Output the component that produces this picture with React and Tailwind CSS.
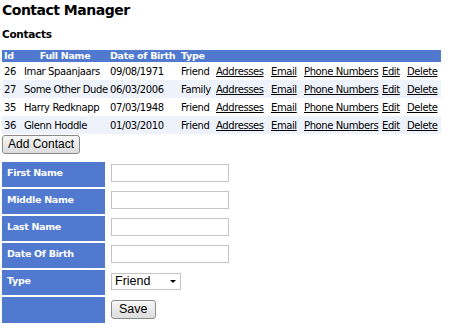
import React from 'react'

const contacts = [
  { id: 26, name: 'Imar Spaanjaars', dob: '09/08/1971', type: 'Friend' },
  { id: 27, name: 'Some Other Dude', dob: '06/03/2006', type: 'Family' },
  { id: 35, name: 'Harry Redknapp', dob: '07/03/1948', type: 'Friend' },
  { id: 36, name: 'Glenn Hoddle', dob: '01/03/2010', type: 'Friend' },
]

const links = ['Addresses', 'Email', 'Phone Numbers', 'Edit', 'Delete']
const colWidths = [20, 86, 71, 35, 55, 33, 78, 25, 36]

const fields = ['First Name', 'Middle Name', 'Last Name', 'Date Of Birth']

const App = () => {
  return (
    <div className="w-[450px] h-[330px] bg-white text-black overflow-hidden px-[2px] text-[10px] tracking-[-0.4px] font-['DejaVu_Sans',Verdana,sans-serif]">
      <h1 className="text-[14px] tracking-[-0.5px] font-bold leading-[18px] pt-[1px]">Contact Manager</h1>
      <h2 className="text-[10.5px] tracking-[-0.3px] font-bold leading-[14px] mt-[8px]">Contacts</h2>

      {/* Contacts grid */}
      <table className="w-[439px] mt-[9px] border-collapse table-fixed whitespace-nowrap">
        <colgroup>
          {colWidths.map((w, i) => (
            <col key={i} style={{ width: w }} />
          ))}
        </colgroup>
        <thead>
          <tr className="bg-[#5079cf] text-white h-[12px] leading-[12px] text-[9.5px] tracking-[-0.3px]">
            <th className="text-left pl-[2px] font-bold">Id</th>
            <th className="font-bold">Full Name</th>
            <th className="text-left pl-[2px] font-bold">Date of Birth</th>
            <th className="text-left pl-[2px] font-bold">Type</th>
            <th colSpan={5}></th>
          </tr>
        </thead>
        <tbody>
          {contacts.map((c, i) => (
            <tr key={c.id} className={`h-[18px] ${i % 2 ? 'bg-[#eef2fb]' : 'bg-white'}`}>
              <td className="pl-[2px]">{c.id}</td>
              <td className="pl-[2px]">{c.name}</td>
              <td className="pl-[2px]">{c.dob}</td>
              <td className="pl-[2px]">{c.type}</td>
              {links.map((l) => (
                <td key={l} className="pl-[2px]">
                  <a className="underline text-black cursor-pointer">{l}</a>
                </td>
              ))}
            </tr>
          ))}
        </tbody>
      </table>

      <button className="mt-[1px] h-[19px] px-[5px] border border-[#8a8a8a] rounded-[3px] bg-gradient-to-b from-[#f7f7f7] to-[#dcdcdc] text-[12px] tracking-normal leading-[15px] font-['Liberation_Sans',Arial,sans-serif]">
        Add Contact
      </button>

      {/* Edit form */}
      <table className="mt-[6px] -ml-[2px] border-separate border-spacing-[2px]">
        <tbody>
          {fields.map((f) => (
            <tr key={f} className="h-[25px]">
              <td className="w-[103px] bg-[#5079cf] text-white font-bold text-[9.5px] tracking-[-0.3px] align-top pl-[5px] pt-[4px] leading-[13px]">{f}</td>
              <td className="pl-[4px] align-top pt-[2px]">
                <input className="block w-[118px] h-[18px] border border-[#c4c4c4] bg-white" />
              </td>
            </tr>
          ))}
          <tr className="h-[25px]">
            <td className="w-[103px] bg-[#5079cf] text-white font-bold text-[9.5px] tracking-[-0.3px] align-top pl-[5px] pt-[4px] leading-[13px]">Type</td>
            <td className="pl-[4px] align-top pt-[3px]">
              <div className="w-[70px] h-[17px] border border-[#c4c4c4] bg-white flex items-center justify-between pl-[3px] pr-[4px] font-['Liberation_Sans',Arial,sans-serif] tracking-normal text-[12.5px]">
                <span>Friend</span>
                <span className="w-0 h-0 border-l-[3px] border-r-[3px] border-t-[3px] border-l-transparent border-r-transparent border-t-black"></span>
              </div>
            </td>
          </tr>
          <tr className="h-[26px]">
            <td className="w-[103px] bg-[#5079cf]"></td>
            <td className="pl-[4px] align-top pt-[3px]">
              <button className="block h-[19px] px-[7px] border border-[#8a8a8a] rounded-[3px] bg-gradient-to-b from-[#f7f7f7] to-[#dcdcdc] text-[12.5px] tracking-normal leading-[15px] font-['Liberation_Sans',Arial,sans-serif]">
                Save
              </button>
            </td>
          </tr>
        </tbody>
      </table>
    </div>
  )
}

export default App
